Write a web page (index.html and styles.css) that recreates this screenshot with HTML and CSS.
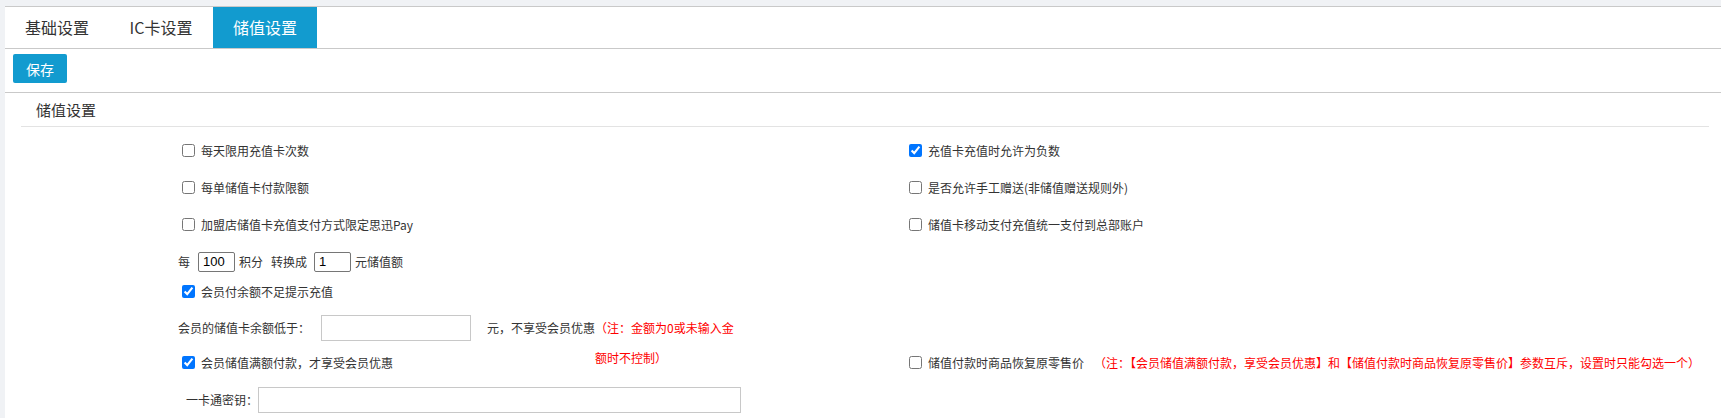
FILE: index.html
```html
<!DOCTYPE html>
<html lang="zh-CN">
<head>
    <meta charset="UTF-8">
    <title>储值设置</title>
    <link rel="stylesheet" href="styles.css">
</head>
<body>
    <div class="panel">
        <ul class="tabs">
            <li>基础设置</li>
            <li>IC卡设置</li>
            <li class="active">储值设置</li>
        </ul>
        <div class="toolbar">
            <button class="btn-save">保存</button>
        </div>
        <div class="section-title">储值设置</div>
        <div class="form">
            <div class="cell">
                <label class="chk"><input type="checkbox"><span>每天限用充值卡次数</span></label>
            </div>
            <div class="cell">
                <label class="chk"><input type="checkbox" checked><span>充值卡充值时允许为负数</span></label>
            </div>
            <div class="cell">
                <label class="chk"><input type="checkbox"><span>每单储值卡付款限额</span></label>
            </div>
            <div class="cell">
                <label class="chk"><input type="checkbox"><span>是否允许手工赠送(非储值赠送规则外)</span></label>
            </div>
            <div class="cell">
                <label class="chk"><input type="checkbox"><span>加盟店储值卡充值支付方式限定思迅Pay</span></label>
            </div>
            <div class="cell">
                <label class="chk"><input type="checkbox"><span>储值卡移动支付充值统一支付到总部账户</span></label>
            </div>
            <div class="cell wide">
                <span>每</span>
                <input class="num-input first" type="text" value="100">
                <span class="unit">积分</span>
                <span class="unit gap">转换成</span>
                <input class="num-input" type="text" value="1">
                <span class="unit">元储值额</span>
            </div>
            <div class="cell wide">
                <label class="chk"><input type="checkbox" checked><span>会员付余额不足提示充值</span></label>
            </div>
            <div class="cell wide top">
                <span class="field-label">会员的储值卡余额低于：</span>
                <input class="text-input balance" type="text">
                <span class="field-label after">元，不享受会员优惠</span>
                <span class="note wrap">（注：金额为0或未输入金额时不控制）</span>
            </div>
            <div class="cell">
                <label class="chk"><input type="checkbox" checked><span>会员储值满额付款，才享受会员优惠</span></label>
            </div>
            <div class="cell">
                <label class="chk"><input type="checkbox"><span>储值付款时商品恢复原零售价</span></label>
                <span class="note tip">（注：【会员储值满额付款，享受会员优惠】和【储值付款时商品恢复原零售价】参数互斥，设置时只能勾选一个）</span>
            </div>
            <div class="cell wide key-row">
                <span class="field-label key">一卡通密钥：</span>
                <input class="text-input secret" type="text">
            </div>
        </div>
    </div>
</body>
</html>
```

FILE: styles.css
```css
*{
    box-sizing: border-box;
}
body{
    margin:0;
    padding:6px 0 0 5px;
    background:#f0f2f5;
    font-family:"Noto Sans CJK SC", "Liberation Sans", sans-serif;
    font-size:12px;
    color:#333;
}
.panel{
    background:#fff;
    border-top:1px solid #c9c9c9;
    min-height:412px;
}
/* tabs */
.tabs{
    list-style:none;
    margin:0;
    padding:0;
    display:flex;
    height:42px;
    border-bottom:1px solid #c9c9c9;
}
.tabs li{
    min-width:104px;
    padding:0 20px;
    text-align:center;
    line-height:41px;
    font-size:16px;
    color:#333;
}
.tabs .active{
    background:#129bcf;
    color:#fff;
}
/* toolbar */
.toolbar{
    height:44px;
    padding:5px 0 0 8px;
    border-bottom:1px solid #c9c9c9;
}
.btn-save{
    height:29px;
    padding:0 13px;
    border:none;
    border-radius:2px;
    background:#129bcf;
    color:#fff;
    font-family:inherit;
    font-size:14px;
}
.section-title{
    margin:0 12px 0 16px;
    padding-left:15px;
    line-height:33px;
    height:34px;
    border-bottom:1px solid #e3e3e3;
    font-size:15px;
    color:#333;
}
/* form grid */
.form{
    display:grid;
    grid-template-columns:727px 1fr;
    grid-template-rows:37px 37px 37px 37px 22px 50px 20px auto;
    padding:5px 0 0 173px;
}
.cell{
    display:flex;
    align-items:center;
    white-space:nowrap;
}
.cell.wide{
    grid-column:1 / -1;
}
.cell.top{
    align-items:flex-start;
    padding-top:11px;
}
.chk{
    display:inline-flex;
    align-items:center;
}
.chk input{
    width:13px;
    height:13px;
    margin:0 6px 0 4px;
}
.num-input{
    width:37px;
    height:20px;
    margin-left:7px;
    padding:0 4px;
    border:1px solid #767676;
    border-radius:2px;
    font-family:"Liberation Sans", sans-serif;
    font-size:13px;
    color:#000;
}
.num-input.first{
    margin-left:8px;
}
.unit{
    margin-left:4px;
}
.unit.gap{
    margin-left:8px;
}
.field-label{
    line-height:30px;
}
.field-label.after{
    margin-left:16px;
}
.text-input{
    height:26px;
    border:1px solid #c8c8c8;
    padding:0 4px;
    font-size:12px;
}
.balance{
    width:150px;
    margin:2px 0 0 11px;
}
.note{
    color:#f00;
}
.note.wrap{
    display:inline-block;
    width:145px;
    line-height:30px;
    white-space:normal;
}
.note.tip{
    margin-left:10px;
}
.key-row{
    align-items:flex-start;
    padding-top:15px;
}
.field-label.key{
    margin-left:8px;
    line-height:26px;
}
.secret{
    width:483px;
}
```
